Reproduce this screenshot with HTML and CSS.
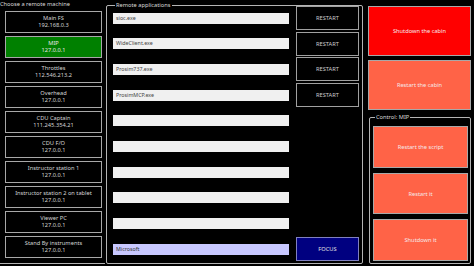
FILE: index.html
```html
<!DOCTYPE html>
<html>
<head>
<meta charset="utf-8">
<link rel="stylesheet" href="styles.css">
</head>
<body>
<div class="app">
  <section class="machines">
    <div class="title">Choose a remote machine</div>
    <div class="machine-list">
      <button class="machine"><span>Main FS</span><span>192.168.0.3</span></button>
      <button class="machine active"><span>MIP</span><span>127.0.0.1</span></button>
      <button class="machine"><span>Throttles</span><span>112.546.213.2</span></button>
      <button class="machine"><span>Overhead</span><span>127.0.0.1</span></button>
      <button class="machine"><span>CDU Captain</span><span>111.245.354.21</span></button>
      <button class="machine"><span>CDU F/O</span><span>127.0.0.1</span></button>
      <button class="machine"><span>Instructor station 1</span><span>127.0.0.1</span></button>
      <button class="machine"><span>Instructor station 2 on tablet</span><span>127.0.0.1</span></button>
      <button class="machine"><span>Viewer PC</span><span>127.0.0.1</span></button>
      <button class="machine"><span>Stand By instruments</span><span>127.0.0.1</span></button>
    </div>
  </section>

  <fieldset class="group apps">
    <legend>Remote applications</legend>
    <div class="app-grid">
      <div class="textbox">sioc.exe</div><button class="restart">RESTART</button>
      <div class="textbox">WideClient.exe</div><button class="restart">RESTART</button>
      <div class="textbox">Prosim737.exe</div><button class="restart">RESTART</button>
      <div class="textbox">ProsimMCP.exe</div><button class="restart">RESTART</button>
      <div class="textbox"></div><div></div>
      <div class="textbox"></div><div></div>
      <div class="textbox"></div><div></div>
      <div class="textbox"></div><div></div>
      <div class="textbox"></div><div></div>
      <div class="textbox focused">Microsoft</div><button class="focus">FOCUS</button>
    </div>
  </fieldset>

  <div class="controls">
    <button class="big red">Shutdown the cabin</button>
    <button class="big tomato">Restart the cabin</button>
    <fieldset class="group control">
      <legend>Control: MIP</legend>
      <div class="control-list">
        <button class="big tomato">Restart the script</button>
        <button class="big tomato">Restart it</button>
        <button class="big tomato">Shutdown it</button>
      </div>
    </fieldset>
  </div>
</div>
</body>
</html>
```
FILE: styles.css
```css
html, body {
  margin: 0;
  padding: 0;
  background: #000;
  width: 474px;
  height: 266px;
  overflow: hidden;
}

body {
  font-family: "Noto Sans", "Open Sans", sans-serif;
  font-size: 5.7px;
  color: #d4d4d4;
}

.app {
  display: flex;
  align-items: flex-start;
  height: 266px;
}

button {
  font-family: inherit;
  font-size: 5.7px;
  margin: 0;
  padding: 0;
  box-sizing: border-box;
  cursor: default;
}

/* left column */
.machines {
  width: 105px;
  height: 264px;
  box-sizing: border-box;
  border-bottom: 1px solid #b4b4b4;
}

.title {
  line-height: 9px;
  height: 9px;
  white-space: nowrap;
  color: #d8d8d8;
}

.machine-list {
  display: flex;
  flex-direction: column;
  gap: 3px;
  margin-top: 2px;
  padding-left: 5px;
}

.machine {
  width: 97px;
  height: 22px;
  background: #000;
  border: 1px solid #a8a8a8;
  color: #d4d4d4;
  display: flex;
  flex-direction: column;
  align-items: center;
  justify-content: center;
  line-height: 7px;
}

.machine.active {
  background: #008000;
  color: #e4e4e4;
}

/* groups */
.group {
  margin: 0;
  padding: 0;
  min-width: 0;
  box-sizing: border-box;
  border: 1px solid #b4b4b4;
  border-radius: 2px;
}

.group legend {
  padding: 0 1px;
  margin-left: 2px;
  line-height: 8px;
  color: #d8d8d8;
  white-space: nowrap;
}

.apps {
  margin-left: 1px;
  margin-top: 1px;
  width: 257px;
  height: 263px;
  padding: 0 3px 0 6px;
}

.app-grid {
  margin-top: -3px;
  display: grid;
  grid-template-columns: 176px 63px;
  grid-template-rows: repeat(10, 24px);
  column-gap: 7px;
  row-gap: 1.7px;
}

.textbox {
  align-self: center;
  height: 11px;
  box-sizing: border-box;
  background: #f0f0f0;
  color: #444;
  line-height: 11px;
  padding-left: 3px;
  font-size: 5.3px;
}

.textbox.focused {
  background: #c8c8ff;
  color: #333;
}

.restart {
  background: #000;
  border: 1px solid #a0a0a0;
  color: #cccccc;
}

.focus {
  background: #000080;
  border: 1px solid #8080c0;
  color: #e0e0e0;
}

/* right column */
.controls {
  margin-left: 5px;
  width: 103px;
  padding-top: 6px;
  height: 264px;
  box-sizing: border-box;
  display: flex;
  flex-direction: column;
}

.big {
  border: 1px solid #a8a8a8;
  color: #f6e8e8;
}

.controls > .big {
  height: 50px;
  width: 103px;
}

.controls > .big + .big {
  margin-top: 4px;
}

.red {
  background: #ff0000;
}

.tomato {
  background: #ff6347;
}

.control {
  margin-top: 3px;
  margin-left: 1px;
  width: 102px;
  flex: 1;
  padding: 5px 2px 2px 3px;
}

.control-list {
  display: flex;
  flex-direction: column;
  gap: 5px;
  height: 100%;
}

.control-list .big {
  flex: 1;
  width: 95px;
}
```
